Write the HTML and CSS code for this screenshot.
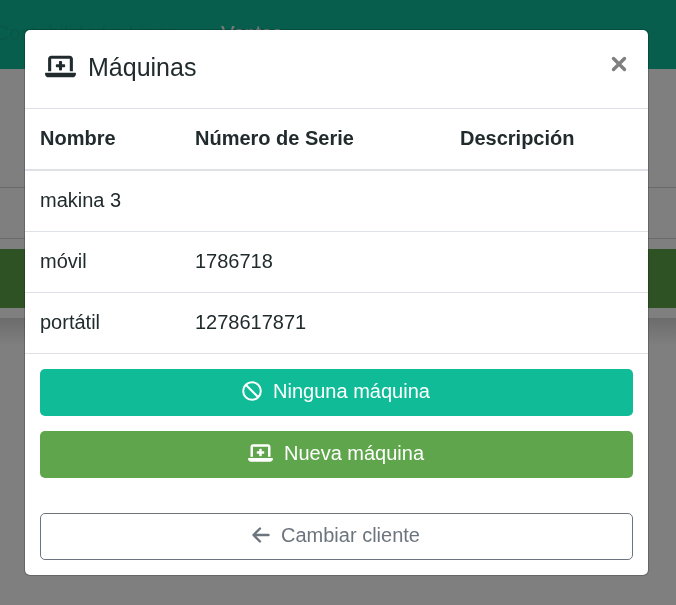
FILE: index.html
```html
<!DOCTYPE html>
<html lang="es">
<head>
  <meta charset="UTF-8">
  <meta name="viewport" content="width=device-width, initial-scale=1.0">
  <title>Máquinas</title>
  <link rel="stylesheet" href="styles.css">
</head>
<body>

<svg class="sprite" aria-hidden="true">
  <symbol id="laptop-medical" viewBox="0 0 640 512">
    <path d="M64 96c0-35.300 28.700-64 64-64h384c35.300 0 64 28.700 64 64v256h-64V96H128v256H64V96zM0 403.200C0 392.600 8.600 384 19.200 384h601.600c10.600 0 19.200 8.600 19.200 19.200 0 42.400-34.400 76.800-76.800 76.800H76.800C34.400 480 0 445.600 0 403.200zM288 160c0-8.800 7.200-16 16-16h32c8.800 0 16 7.200 16 16v48h48c8.800 0 16 7.200 16 16v32c0 8.800-7.200 16-16 16h-48v48c0 8.800-7.200 16-16 16h-32c-8.800 0-16-7.200-16-16v-48h-48c-8.800 0-16-7.200-16-16v-32c0-8.800 7.200-16 16-16h48v-48z"/>
  </symbol>
</svg>

<nav class="navbar">
  <a href="#" class="brand">Contabilidad e Línea</a>
  <a href="#" class="nav-link">Ventas</a>
</nav>

<main class="card">
  <input type="text" class="field" aria-label="Cliente">
  <button type="button" class="save" aria-label="Guardar"></button>
</main>
<div class="card-shadow"></div>

<div class="backdrop">
  <div class="modal" role="dialog" aria-labelledby="modalTitle">
    <div class="modal-header">
      <h5 id="modalTitle"><svg class="icon-laptop"><use href="#laptop-medical"/></svg>Máquinas</h5>
      <button type="button" class="close" aria-label="Cerrar">
        <svg viewBox="0 0 16 16"><path d="M2.500 2.500l11 11M13.500 2.500l-11 11"/></svg>
      </button>
    </div>

    <table>
      <thead>
        <tr>
          <th class="col-name">Nombre</th>
          <th class="col-serial">Número de Serie</th>
          <th>Descripción</th>
        </tr>
      </thead>
      <tbody>
        <tr><td>makina 3</td><td></td><td></td></tr>
        <tr><td>móvil</td><td>1786718</td><td></td></tr>
        <tr><td>portátil</td><td>1278617871</td><td></td></tr>
      </tbody>
    </table>

    <div class="modal-actions">
      <button type="button" class="btn btn-none">
        <svg class="icon-ban" viewBox="0 0 20 20"><circle cx="10" cy="10" r="8.800"/><path d="M4 4l12 12"/></svg>
        Ninguna máquina
      </button>
      <button type="button" class="btn btn-new">
        <svg class="icon-laptop"><use href="#laptop-medical"/></svg>
        Nueva máquina
      </button>
      <button type="button" class="btn btn-back">
        <svg class="icon-arrow" viewBox="0 0 18 16"><path d="M16.500 8H2M8 1.500L1.500 8 8 14.500"/></svg>
        Cambiar cliente
      </button>
    </div>
  </div>
</div>

</body>
</html>
```
FILE: styles.css
```css
* {
  box-sizing: border-box;
}

body {
  margin: 0;
  font-family: "Liberation Sans", Arial, sans-serif;
  font-size: 20px;
  line-height: 30px;
  color: #212b2d;
  background: #fff;
}

.sprite {
  position: absolute;
  width: 0;
  height: 0;
}

/* page behind the dialog */
.navbar {
  display: flex;
  align-items: center;
  height: 69px;
  padding-bottom: 3px;
  background: #10bc98;
}

.navbar a {
  text-decoration: none;
}

.brand {
  width: 226px;
  margin-left: -5px;
  color: #10b090;
  white-space: nowrap;
}

.nav-link {
  color: #fff;
}

.card {
  margin-top: 118px;
  padding-bottom: 10px;
}

.card-shadow {
  height: 28px;
  background: linear-gradient(#d8d8d8, #fff);
}

.field {
  display: block;
  width: 100%;
  height: 52px;
  border: 1px solid #ced4da;
  border-width: 1px 0;
}

.save {
  display: block;
  width: 100%;
  height: 59px;
  margin-top: 10px;
  border: none;
  background: #5fa54b;
}

/* dialog */
.backdrop {
  position: fixed;
  inset: 0;
  overflow: auto;
  padding: 29px 27px 29px 24px;
  background: rgba(0,0,0,0.5);
}

.modal {
  max-width: 625px;
  margin: 0 auto;
  background: #fff;
  background-clip: padding-box;
  border: 1px solid rgba(0,0,0,0.2);
  border-radius: 6px;
}

.modal-header {
  display: flex;
  justify-content: space-between;
  align-items: flex-start;
  padding: 18px 20px 22px;
}

h5 {
  display: flex;
  align-items: center;
  gap: 12px;
  margin: 0;
  font-size: 25px;
  font-weight: normal;
  line-height: 38px;
}

.icon-laptop {
  width: 25px;
  height: 20px;
  fill: currentColor;
}

h5 .icon-laptop {
  width: 31px;
  height: 25px;
  margin-bottom: 2px;
}

.close {
  padding: 8px 0;
  border: none;
  background: none;
  color: #7f7f7f;
  cursor: pointer;
}

.close svg {
  display: block;
  width: 18px;
  height: 16px;
  stroke: currentColor;
  stroke-width: 3.4;
  stroke-linecap: round;
}

table {
  width: 100%;
  border-spacing: 0;
}

th,
td {
  height: 61px;
  padding: 14px 15px 16px;
  text-align: left;
  border-bottom: 1px solid #dee2e6;
}

th {
  border-top: 1px solid #dee2e6;
  border-bottom-width: 2px;
}

.col-name {
  width: 155px;
}

.col-serial {
  width: 265px;
}

.modal-actions {
  display: flex;
  flex-direction: column;
  gap: 15px;
  padding: 15px;
}

.btn {
  display: flex;
  justify-content: center;
  align-items: center;
  gap: 11px;
  height: 47px;
  padding: 0 7px 3px 6px;
  border: 1px solid transparent;
  border-radius: 5px;
  font: inherit;
  color: #fff;
  cursor: pointer;
}

.btn-none {
  background: #10bc98;
}

.btn-new {
  background: #5fa54b;
}

.btn-back {
  margin-top: 20px;
  background: #fff;
  border-color: #6c757d;
  color: #6c757d;
}

.icon-ban,
.icon-arrow {
  width: 20px;
  height: 20px;
  fill: none;
  stroke: currentColor;
  stroke-width: 2;
}

.icon-arrow {
  width: 18px;
  height: 16px;
  stroke-width: 2.4;
  stroke-linecap: round;
  stroke-linejoin: round;
}
```
